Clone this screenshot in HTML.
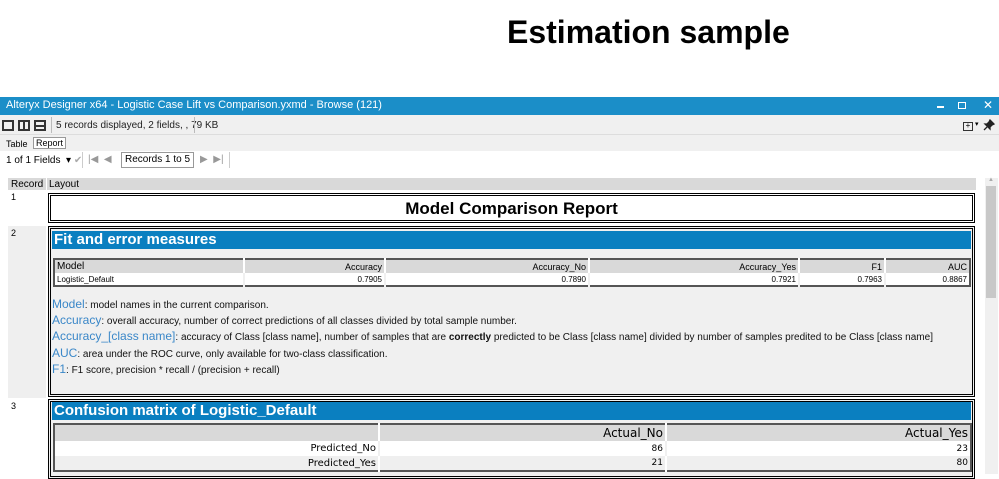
<!DOCTYPE html>
<html><head><meta charset="utf-8"><style>
*{margin:0;padding:0;box-sizing:border-box}
body{width:999px;height:474px;overflow:hidden;background:#fff;font-family:"Liberation Sans",sans-serif;position:relative}
.a{position:absolute}
.t{white-space:nowrap}
.box{position:absolute;border:3px double #000;background:#f0f0f0}
.hdr{position:absolute;background:#0a7fc0;color:#fff;font-weight:bold;font-size:15px;padding-left:2px;line-height:18px}
table{border-collapse:collapse;position:absolute}
td{white-space:nowrap;padding:0 2px}
.lbl{color:#3a87c8;font-size:12px}
.desc{font-size:10px;color:#111}
.ln{height:16.2px;line-height:14px;font-size:10px}
</style></head><body>
<div class="a t" style="left:507px;top:14px;font-size:32px;font-weight:bold;color:#000">Estimation sample</div>

<div class="a" style="left:0;top:97px;width:999px;height:18px;background:#1b8ec8"></div>
<div class="a t" style="left:6px;top:99px;font-size:11px;color:#fff">Alteryx Designer x64 - Logistic Case Lift vs Comparison.yxmd - Browse (121)</div>
<div class="a" style="left:937px;top:106px;width:7px;height:2px;background:#fff"></div>
<div class="a" style="left:958px;top:102px;width:8px;height:7px;border:1.5px solid #fff"></div>
<div class="a t" style="left:983px;top:98px;font-size:12px;color:#fff">✕</div>

<div class="a" style="left:0;top:115px;width:999px;height:20px;background:#f0f0f0;border-bottom:1px solid #ddd"></div>
<div class="a" style="left:2px;top:120px;width:12px;height:11px;border:2px solid #333"></div>
<div class="a" style="left:18px;top:120px;width:12px;height:11px;border:2px solid #333"></div>
<div class="a" style="left:23px;top:120px;width:2px;height:11px;background:#333"></div>
<div class="a" style="left:34px;top:120px;width:12px;height:11px;border:2px solid #333"></div>
<div class="a" style="left:34px;top:125px;width:12px;height:2px;background:#333"></div>
<div class="a" style="left:51px;top:117px;width:1px;height:16px;background:#bbb"></div>
<div class="a t" style="left:56px;top:120px;font-size:10px;color:#222">5 records displayed, 2 fields, , 79 KB</div>
<div class="a" style="left:194px;top:117px;width:1px;height:16px;background:#bbb"></div>
<div class="a" style="left:963px;top:122px;width:10px;height:9px;border:1.5px solid #333;font-size:8px;line-height:6px;text-align:center">+</div>
<div class="a t" style="left:975px;top:120px;font-size:7px">▾</div>
<svg class="a" style="left:983px;top:119px" width="12" height="12" viewBox="0 0 12 12"><path d="M7 1 L11 5 L9 6 L7 8 L7 10 L2 5 L4 5 L6 3 Z M4 8 L1 11" stroke="#222" stroke-width="1.3" fill="#222"/></svg>

<div class="a" style="left:0;top:135px;width:999px;height:16px;background:#f0f0f0"></div>
<div class="a t" style="left:6px;top:139px;font-size:9px">Table</div>
<div class="a t" style="left:33px;top:137px;font-size:9px;border:1px solid #999;background:#fff;padding:0 2px">Report</div>

<div class="a t" style="left:6px;top:155px;font-size:10px">1 of 1 Fields &nbsp;▾ <span style="color:#aaa">✔</span></div>
<div class="a" style="left:82px;top:152px;width:1px;height:16px;background:#ccc"></div>
<div class="a t" style="left:88px;top:154px;font-size:10px;color:#999">|◀ &nbsp;◀</div>
<div class="a t" style="left:121px;top:152px;width:73px;height:16px;border:1px solid #999;font-size:10px;text-align:center;line-height:14px">Records 1 to 5</div>
<div class="a t" style="left:200px;top:154px;font-size:10px;color:#999">▶ &nbsp;▶|</div>
<div class="a" style="left:229px;top:152px;width:1px;height:16px;background:#ccc"></div>

<div class="a" style="left:0;top:174px;width:999px;height:300px;background:#fff"></div>
<div class="a" style="left:8px;top:178px;width:968px;height:12px;background:#d9d9d9"></div>
<div class="a t" style="left:11px;top:179px;font-size:10px">Record</div>
<div class="a" style="left:46px;top:178px;width:1px;height:12px;background:#fff"></div>
<div class="a t" style="left:49px;top:179px;font-size:10px">Layout</div>
<div class="a" style="left:985px;top:178px;width:13px;height:296px;background:#f0f0f0"></div>
<div class="a t" style="left:988px;top:177px;font-size:6px;color:#aaa">▲</div>
<div class="a" style="left:986px;top:186px;width:10px;height:112px;background:#c8c8c8"></div>
<div class="a" style="left:8px;top:226px;width:38px;height:172px;background:#efefef"></div>
<div class="a t" style="left:11px;top:192px;font-size:9px">1</div>
<div class="a t" style="left:11px;top:228px;font-size:9px">2</div>
<div class="a t" style="left:11px;top:401px;font-size:9px">3</div>

<div class="box" style="left:48px;top:193px;width:927px;height:30px;background:#fff;border-width:3px"></div>
<div class="a t" style="left:48px;top:199px;width:927px;text-align:center;font-size:17px;font-weight:bold">Model Comparison Report</div>

<div class="box" style="left:48px;top:226px;width:927px;height:171px"></div>
<div class="hdr" style="left:52px;top:231px;width:919px;height:18px">Fit and error measures</div>
<table style="left:53px;top:258px;width:918px;border:2px solid #555;font-size:9px;background:#fff">
<tr style="background:#d9d9d9;height:14px"><td style="width:190px;border-right:2px solid #fff;font-size:10px">Model</td><td style="width:141px;text-align:right;border-right:2px solid #fff">Accuracy</td><td style="width:204px;text-align:right;border-right:2px solid #fff">Accuracy_No</td><td style="width:210px;text-align:right;border-right:2px solid #fff">Accuracy_Yes</td><td style="width:86px;text-align:right;border-right:2px solid #fff">F1</td><td style="text-align:right">AUC</td></tr>
<tr style="height:13px;font-size:8px"><td style="border-right:2px solid #f0f0f0">Logistic_Default</td><td style="text-align:right;border-right:2px solid #f0f0f0">0.7905</td><td style="text-align:right;border-right:2px solid #f0f0f0">0.7890</td><td style="text-align:right;border-right:2px solid #f0f0f0">0.7921</td><td style="text-align:right;border-right:2px solid #f0f0f0">0.7963</td><td style="text-align:right">0.8867</td></tr>
</table>
<div class="a t" style="left:52px;top:297px">
<div class="ln"><span class="lbl">Model</span><span class="desc">: model names in the current comparison.</span></div>
<div class="ln"><span class="lbl">Accuracy</span><span class="desc">: overall accuracy, number of correct predictions of all classes divided by total sample number.</span></div>
<div class="ln"><span class="lbl">Accuracy_[class name]</span><span class="desc">: accuracy of Class [class name], number of samples that are <b>correctly</b> predicted to be Class [class name] divided by number of samples predited to be Class [class name]</span></div>
<div class="ln"><span class="lbl">AUC</span><span class="desc">: area under the ROC curve, only available for two-class classification.</span></div>
<div class="ln"><span class="lbl">F1</span><span class="desc">: F1 score, precision * recall / (precision + recall)</span></div>
</div>

<div class="box" style="left:48px;top:399px;width:927px;height:80px"></div>
<div class="hdr" style="left:52px;top:402px;width:919px;height:18px;font-size:15px">Confusion matrix of Logistic_Default</div>
<table style="left:53px;top:423px;width:919px;border:2px solid #555;font-size:10px;background:#fff;font-family:'DejaVu Sans',sans-serif">
<tr style="background:#d9d9d9;height:17px;font-size:12px"><td style="width:325px;border-right:2px solid #fff"></td><td style="width:287px;text-align:right;border-right:2px solid #fff">Actual_No</td><td style="text-align:right">Actual_Yes</td></tr>
<tr style="height:15px"><td style="text-align:right;border-right:2px solid #f0f0f0">Predicted_No</td><td style="text-align:right;border-right:2px solid #f0f0f0;font-size:9px">86</td><td style="text-align:right;font-size:9px">23</td></tr>
<tr style="height:15px;background:#efefef"><td style="text-align:right;border-right:2px solid #fff">Predicted_Yes</td><td style="text-align:right;border-right:2px solid #fff;font-size:9px">21</td><td style="text-align:right;font-size:9px">80</td></tr>
</table>
</body></html>
